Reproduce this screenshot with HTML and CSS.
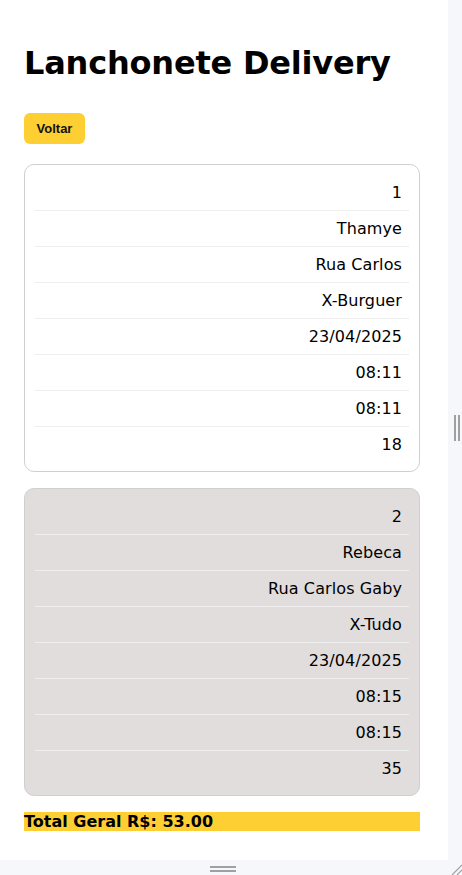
FILE: index.html
```html
<!DOCTYPE html>
<html lang="pt-BR">
<head>
<meta charset="utf-8">
<title>Lanchonete Delivery</title>
<link rel="stylesheet" href="styles.css">
</head>
<body>
<div class="frame">
  <div class="viewport">
    <main class="page">
      <h1 class="title">Lanchonete Delivery</h1>
      <button class="btn-back" type="button">Voltar</button>
      <section class="card">
        <div class="row">1</div>
        <div class="row">Thamye</div>
        <div class="row">Rua Carlos</div>
        <div class="row">X-Burguer</div>
        <div class="row">23/04/2025</div>
        <div class="row">08:11</div>
        <div class="row">08:11</div>
        <div class="row">18</div>
      </section>
      <section class="card card-alt">
        <div class="row">2</div>
        <div class="row">Rebeca</div>
        <div class="row">Rua Carlos Gaby</div>
        <div class="row">X-Tudo</div>
        <div class="row">23/04/2025</div>
        <div class="row">08:15</div>
        <div class="row">08:15</div>
        <div class="row">35</div>
      </section>
      <div class="total">Total Geral R$: 53.00</div>
    </main>
  </div>
  <div class="strip-right"><span class="grip-v"></span></div>
  <div class="strip-bottom"><span class="grip-h"></span></div>
  <div class="strip-corner">
    <svg width="14" height="15" viewBox="0 0 14 15"><path d="M4 15 L14 5 M9 15 L14 10" stroke="#a0a0a0" stroke-width="1.2" fill="none"/></svg>
  </div>
</div>
</body>
</html>
```

FILE: styles.css
```css
* { box-sizing: border-box; }
html, body { margin: 0; padding: 0; }
body {
  font-family: "DejaVu Sans", Verdana, sans-serif;
  color: #000;
  background: #f6f7fb;
}
.frame {
  display: grid;
  grid-template-columns: 448px 14px;
  grid-template-rows: 860px 15px;
  width: 462px;
  height: 875px;
  overflow: hidden;
}
.viewport {
  background: #fff;
  overflow: hidden;
}
.page {
  padding: 45px 28px 0 24px;
  display: flex;
  flex-direction: column;
  align-items: flex-start;
}
.title {
  margin: 0;
  font-size: 32px;
  line-height: 37px;
  font-weight: bold;
  letter-spacing: -0.2px;
}
.btn-back {
  margin-top: 31px;
  width: 61px;
  height: 31px;
  padding: 0;
  border: none;
  border-radius: 6px;
  background: #fdcf33;
  font-family: "Liberation Sans", Arial, sans-serif;
  font-weight: bold;
  font-size: 13px;
  color: #111;
}
.card {
  margin-top: 20px;
  width: 396px;
  border: 1px solid #cfcfcf;
  border-radius: 10px;
  padding: 10px 10px 9px;
  background: #fff;
}
.card-alt {
  margin-top: 16px;
  background: #e0dddc;
}
.row {
  padding: 8px 7px 8px 8px;
  text-align: right;
  font-size: 16px;
  line-height: 19px;
  letter-spacing: 0.1px;
  border-bottom: 1px solid #eeeeee;
}
.row:last-child { border-bottom: none; }
.total {
  margin-top: 16px;
  width: 396px;
  background: #fdcf33;
  font-weight: bold;
  font-size: 16px;
  line-height: 19px;
}
.strip-right {
  background: #f6f7fb;
  display: flex;
  align-items: center;
  justify-content: center;
}
.grip-v {
  width: 6px;
  height: 26px;
  border-left: 2px solid #a0a0a0;
  border-right: 2px solid #a0a0a0;
  margin-left: 3px;
  margin-top: -5px;
}
.strip-bottom {
  background: #f6f7fb;
  display: flex;
  justify-content: center;
  align-items: center;
}
.grip-h {
  width: 26px;
  height: 6px;
  border-top: 2px solid #a0a0a0;
  border-bottom: 2px solid #a0a0a0;
  margin-left: -3px;
  margin-top: 3px;
}
.strip-corner {
  background: #f6f7fb;
  display: flex;
}
```
